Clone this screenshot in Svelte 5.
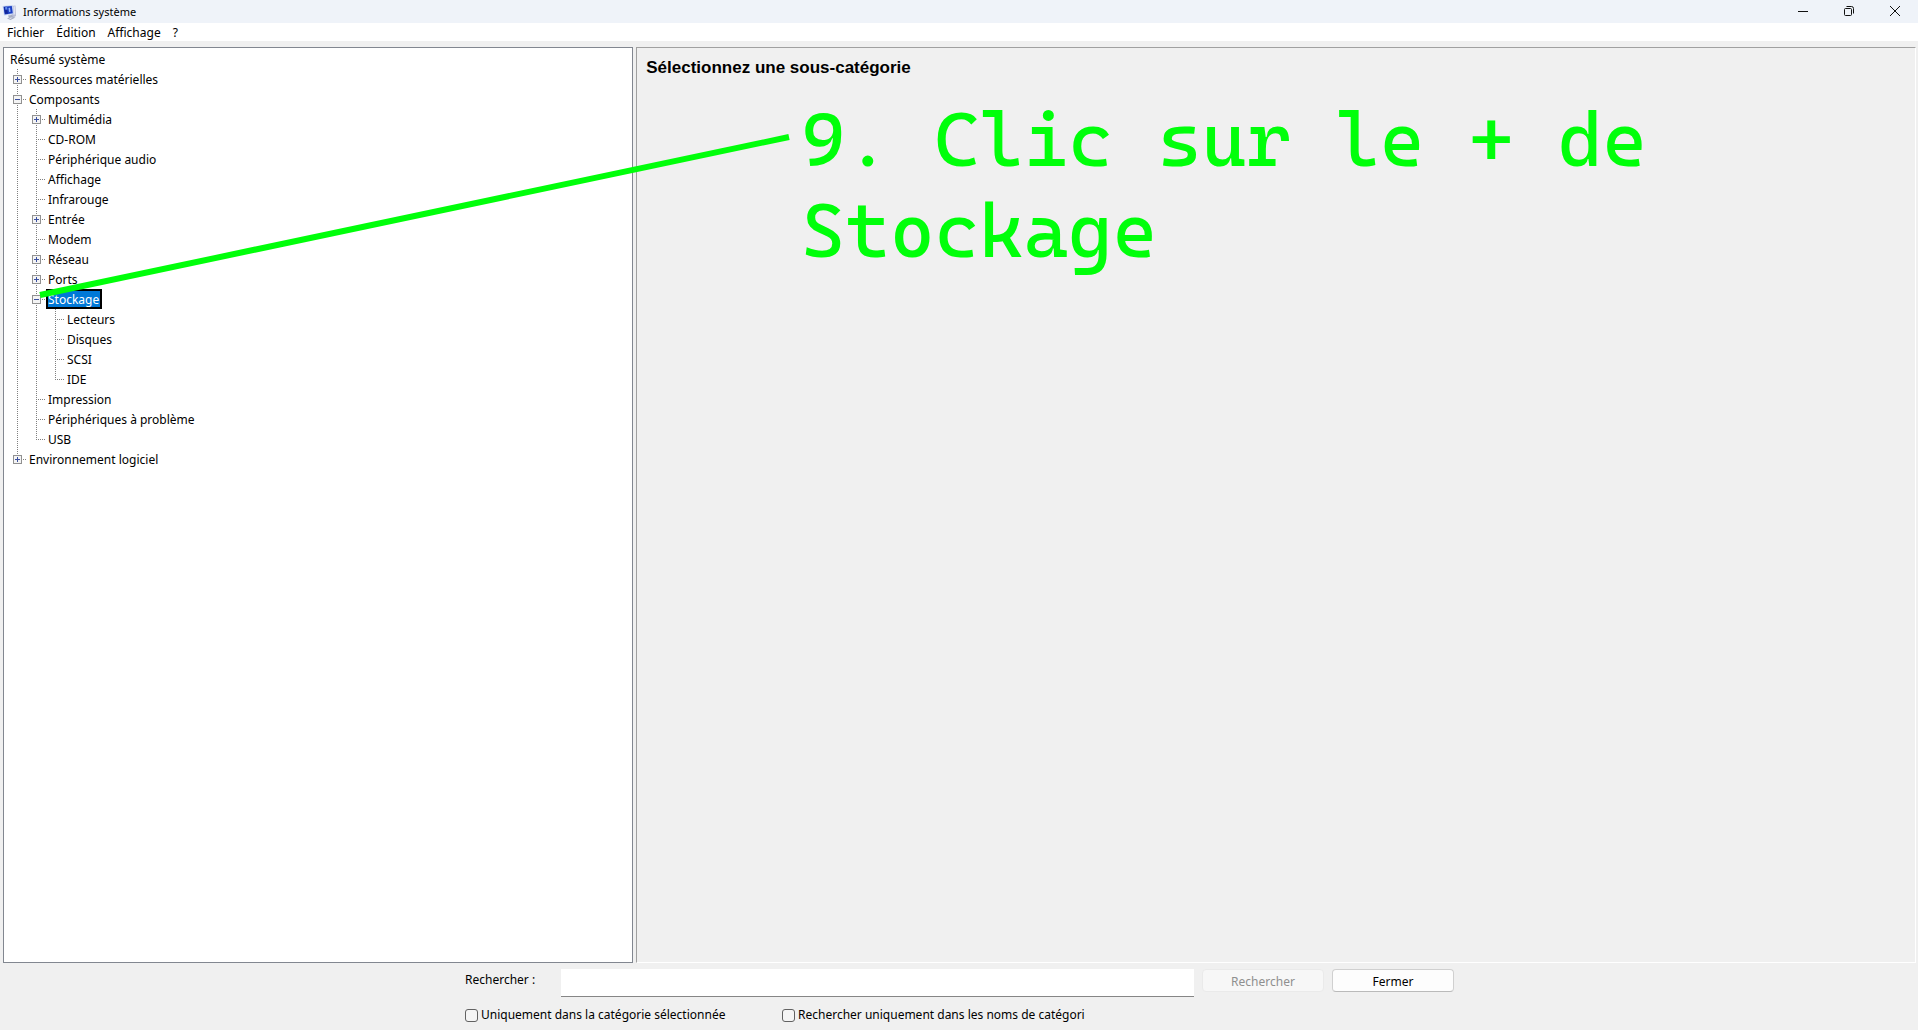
<script lang="ts">
  type TreeNode = { name: string; open?: boolean; children?: TreeNode[] };
  type Guide = 'pass' | 'blank' | 'tee' | 'end';
  type Row = { node: TreeNode; guides: Guide[] };

  const menus = ['Fichier', 'Édition', 'Affichage', '?'];

  let categories: TreeNode[] = $state([
    { name: 'Ressources matérielles', children: [] },
    {
      name: 'Composants',
      open: true,
      children: [
        { name: 'Multimédia', children: [] },
        { name: 'CD-ROM' },
        { name: 'Périphérique audio' },
        { name: 'Affichage' },
        { name: 'Infrarouge' },
        { name: 'Entrée', children: [] },
        { name: 'Modem' },
        { name: 'Réseau', children: [] },
        { name: 'Ports', children: [] },
        {
          name: 'Stockage',
          open: true,
          children: [{ name: 'Lecteurs' }, { name: 'Disques' }, { name: 'SCSI' }, { name: 'IDE' }]
        },
        { name: 'Impression' },
        { name: 'Périphériques à problème' },
        { name: 'USB' }
      ]
    },
    { name: 'Environnement logiciel', children: [] }
  ]);

  let selected = $state('Stockage');
  let query = $state('');

  function flatten(nodes: TreeNode[], parents: Guide[] = []): Row[] {
    return nodes.flatMap((node, i) => {
      const last = i === nodes.length - 1;
      const row: Row = { node, guides: [...parents, last ? 'end' : 'tee'] };
      const below = node.open ? flatten(node.children ?? [], [...parents, last ? 'blank' : 'pass']) : [];
      return [row, ...below];
    });
  }

  let rows = $derived(flatten(categories));
</script>

<div class="window">
  <header class="titlebar">
    <svg class="app-icon" viewBox="0 0 16 16" aria-hidden="true">
      <path d="M9.500 2 13.500 1.500 14 12l-3.500 2-1-2z" fill="#b9bdd6" />
      <path d="M11.500 2.500 13 2.300v8l-1.500.7z" fill="#dfe2f0" />
      <path d="M.5 2 10.500 1l1.300 9-9.800 1.500z" fill="#c4d3f3" />
      <path d="M1.500 2.800 9.800 2l1 7.300-8.100 1.200z" fill="#1c3fc4" />
      <path d="M2 3 4.500 2.800 6 9.500l-3 .5z" fill="#13279a" />
      <path d="M3 3.200 5 3l.4 2.500-2 .3z" fill="#5f8df0" />
      <path d="M6.500 4 8 3.800l.6 4-1.600.3z" fill="#8fb4fa" />
      <path d="M6 11.500 10 11l1 2 2.500.5-5 2.500L5 14.500l2-1z" fill="#a5adc2" />
      <path d="M6.500 14 11 13.300l-2.500 1.700z" fill="#dde1ec" />
    </svg>
    <span class="title">Informations système</span>
    <div class="controls">
      <button aria-label="Réduire">
        <svg viewBox="0 0 12 12"><path d="M1 6.500h10" /></svg>
      </button>
      <button aria-label="Restaurer">
        <svg viewBox="0 0 12 12">
          <rect x="1.500" y="3.500" width="7" height="7" rx="1" />
          <path d="M3.500 1.500H8.500a2 2 0 0 1 2 2V8.500" />
        </svg>
      </button>
      <button aria-label="Fermer la fenêtre">
        <svg viewBox="0 0 12 12"><path d="m1 1 10 10M11 1 1 11" /></svg>
      </button>
    </div>
  </header>

  <nav class="menubar">
    {#each menus as menu}
      <button>{menu}</button>
    {/each}
  </nav>

  <main class="panes">
    <section class="tree" aria-label="Catégories">
      <div class="row">
        <button class="label" onclick={() => (selected = 'Résumé système')}>Résumé système</button>
      </div>
      {#each rows as { node, guides }}
        <div class="row">
          {#each guides as guide, i}
            <span class="guide">
              <svg viewBox="0 0 19 20" aria-hidden="true">
                {#if guide === 'pass' || guide === 'tee'}
                  <path d="M7.500 0V20" />
                {:else if guide === 'end'}
                  <path d="M7.500 0V11" />
                {/if}
                {#if guide === 'tee' || guide === 'end'}
                  <path d="M7 10.500H17" />
                {/if}
              </svg>
              {#if node.children && i === guides.length - 1}
                <button
                  class="expander"
                  aria-label={node.open ? `Réduire ${node.name}` : `Développer ${node.name}`}
                  onclick={() => (node.open = !node.open)}
                >
                  <svg viewBox="0 0 9 9" aria-hidden="true">
                    <rect x="0.500" y="0.500" width="8" height="8" />
                    <path d={node.open ? 'M2 4.500h5' : 'M2 4.500h5M4.500 2v5'} />
                  </svg>
                </button>
              {/if}
            </span>
          {/each}
          <button class="label" class:selected={selected === node.name} onclick={() => (selected = node.name)}>
            {node.name}
          </button>
        </div>
      {/each}
    </section>

    <section class="details">
      <h1>Sélectionnez une sous-catégorie</h1>
    </section>
  </main>

  <form class="search" onsubmit={(e) => e.preventDefault()}>
    <div class="line">
      <label class="caption" for="query">Rechercher :</label>
      <input id="query" type="text" bind:value={query} />
      <button type="submit" disabled={!query}>Rechercher</button>
      <button type="button">Fermer</button>
    </div>
    <div class="line options">
      <label><input type="checkbox" />Uniquement dans la catégorie sélectionnée</label>
      <label><input type="checkbox" />Rechercher uniquement dans les noms de catégori</label>
    </div>
  </form>

  <div class="callout">
    <svg viewBox="0 0 749 158" aria-hidden="true"><path d="M0 158 749 0" /></svg>
    <p>9. Clic sur le + de Stockage</p>
  </div>
</div>

<style>
  :global(body) {
    margin: 0;
  }

  .window {
    position: relative;
    display: flex;
    flex-direction: column;
    min-height: 100vh;
    overflow: hidden;
    background: #f0f0f0;
    color: #000;
    font-family: 'Noto Sans', 'Open Sans', sans-serif;
    font-size: 12px;
    line-height: 16px;
  }

  button,
  input {
    margin: 0;
    padding: 0;
    border: 0;
    background: none;
    color: inherit;
    font: inherit;
  }

  .titlebar {
    display: flex;
    align-items: center;
    height: 23px;
    padding-left: 2px;
    background: #eff3f9;
  }

  .app-icon {
    width: 16px;
    height: 16px;
    margin-right: 5px;
  }

  .title {
    flex: 1;
    font-size: 11px;
  }

  .controls {
    display: flex;
    align-self: stretch;
  }

  .controls button {
    display: grid;
    width: 46px;
    padding-bottom: 2px;
    place-items: center;
  }

  .controls svg {
    width: 12px;
    height: 12px;
    fill: none;
    stroke: #111;
  }

  .menubar {
    display: flex;
    gap: 12px;
    height: 18px;
    padding-left: 7px;
    background: #fff;
  }

  .menubar button {
    padding-top: 2px;
  }

  .panes {
    display: flex;
    flex: 1;
    gap: 3px;
    padding: 6px 2px 0 3px;
  }

  .tree {
    box-sizing: border-box;
    width: calc(33% - 1px);
    padding: 1px 6px;
    border: 1px solid #828790;
    background: #fff;
  }

  .row {
    display: flex;
    align-items: center;
    height: 20px;
  }

  .guide {
    position: relative;
    width: 19px;
    height: 20px;
  }

  .guide svg {
    display: block;
    fill: none;
    stroke: #808080;
    stroke-dasharray: 1 1;
  }

  .guide .expander {
    position: absolute;
    top: 6px;
    left: 3px;
    width: 9px;
    height: 9px;
  }

  .expander svg {
    stroke-dasharray: none;
  }

  .expander rect {
    fill: #f4f4f4;
    stroke: #919191;
  }

  .expander path {
    stroke: #3b50a0;
  }

  .label {
    box-sizing: border-box;
    height: 16px;
    padding: 1px 1px 0 0;
    line-height: 15px;
    white-space: nowrap;
  }

  .label.selected {
    outline: 2px solid #000;
    background: #0078d7;
    color: #fff;
  }

  .details {
    flex: 1;
    padding: 10px 9px;
    border: 1px solid #fff;
    border-top-color: #a0a0a0;
    border-left-color: #a0a0a0;
  }

  h1 {
    margin: 0;
    font-family: 'Liberation Sans', Arial, sans-serif;
    font-size: 17px;
    line-height: 20px;
  }

  .search {
    display: flex;
    flex-direction: column;
    gap: 10px;
    box-sizing: border-box;
    width: 990px;
    margin: 0 auto;
    padding: 6px 0 7px 1px;
  }

  .line {
    display: flex;
    gap: 8px;
    align-items: flex-start;
  }

  .caption {
    width: 88px;
    padding-top: 3px;
  }

  .line input[type='text'] {
    box-sizing: border-box;
    flex: 1;
    height: 28px;
    padding: 0 4px;
    border-bottom: 1px solid #868686;
    background: #fff;
  }

  .line button {
    box-sizing: border-box;
    width: 122px;
    height: 23px;
    padding-top: 2px;
    border: 1px solid #d0d0d0;
    border-bottom-color: #bababa;
    border-radius: 4px;
    background: #fdfdfd;
  }

  .line button:disabled {
    border-color: #eaeaea;
    background: #f7f7f7;
    color: #8f8f8f;
  }

  .options label {
    display: flex;
    gap: 3px;
    align-items: center;
    width: 309px;
    white-space: nowrap;
  }

  .options input {
    box-sizing: border-box;
    flex: none;
    width: 13px;
    height: 13px;
    border: 1px solid #626262;
    border-radius: 3px;
    background: #f5f5f5;
    appearance: none;
  }

  .options input:checked {
    background: #0067c0;
  }

  .callout {
    position: absolute;
    top: 137px;
    left: 40px;
    pointer-events: none;
  }

  .callout svg {
    display: block;
    width: 749px;
    height: 158px;
    overflow: visible;
    stroke: #00ff0a;
    stroke-width: 6px;
  }

  .callout p {
    position: absolute;
    top: -43px;
    left: 761px;
    width: 860px;
    margin: 0;
    color: #00ff0a;
    font-family: 'Cascadia Mono', 'DejaVu Sans Mono', monospace;
    font-size: 76px;
    line-height: 91px;
  }
</style>
